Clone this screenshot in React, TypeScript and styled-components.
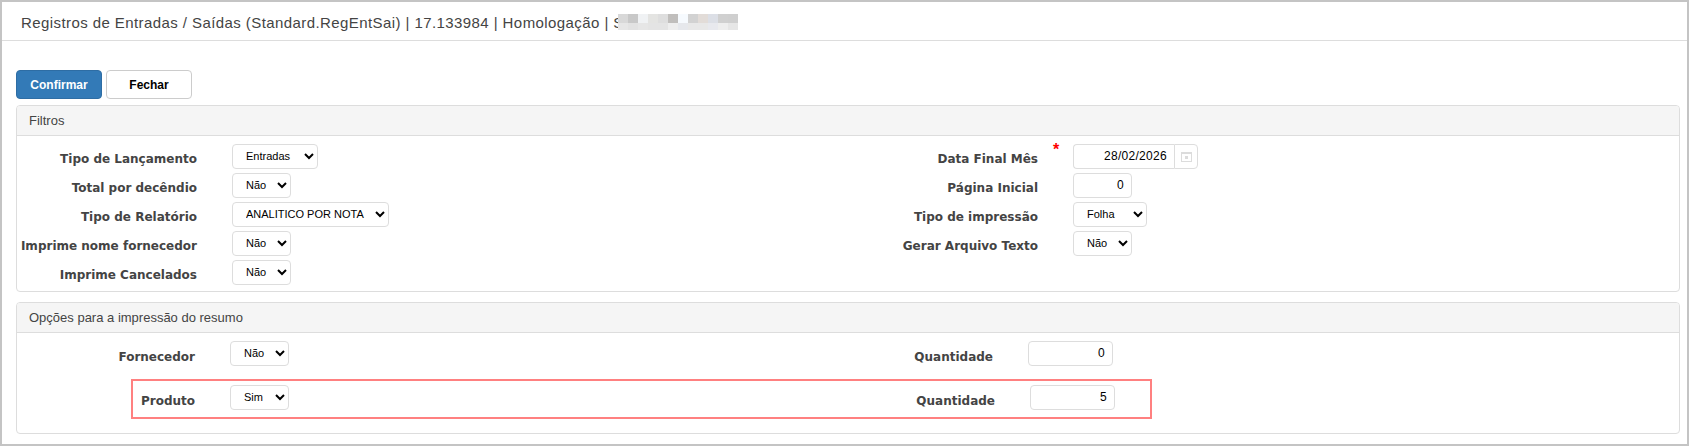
import * as React from "react";
import styled, { createGlobalStyle } from "styled-components";

const GlobalStyle = createGlobalStyle`
	html, body {
		margin: 0;
		padding: 0;
		background: #fff;
	}
`;

const Shell = styled.div`
	box-sizing: border-box;
	width: 1689px;
	height: 446px;
	border: 2px solid #c4c4c4;
	background: #fff;
	font-family: "Liberation Sans", Arial, sans-serif;
`;

const TitleBar = styled.div`
	box-sizing: border-box;
	display: flex;
	align-items: center;
	height: 39px;
	padding: 2px 0 0 19px;
	border-bottom: 1px solid #ddd;
	font-size: 15px;
	letter-spacing: 0.42px;
	color: #444;
	white-space: pre;
`;

const Blurred = styled.span`
	display: grid;
	grid-template-columns: repeat(12, 10px);
	grid-template-rows: 9px 7px;
	margin-left: -6px;
`;

const BlurCell = styled.span<{ $shade: string }>`
	display: block;
	background: ${(p) => p.$shade};
`;

const Toolbar = styled.div`
	display: flex;
	gap: 4px;
	padding: 29px 0 6px 14px;
`;

const Button = styled.button<{ $primary?: boolean }>`
	box-sizing: border-box;
	width: 86px;
	height: 29px;
	padding: 0;
	border: 1px solid ${(p) => (p.$primary ? "#2e6da4" : "#ccc")};
	border-radius: 4px;
	background: ${(p) => (p.$primary ? "#337ab7" : "#fff")};
	color: ${(p) => (p.$primary ? "#fff" : "#000")};
	font-family: "Liberation Sans", Arial, sans-serif;
	font-size: 12px;
	font-weight: bold;
`;

const Panel = styled.section`
	position: relative;
	box-sizing: border-box;
	width: 1664px;
	margin: 0 0 10px 14px;
	border: 1px solid #ddd;
	border-radius: 4px;
`;

const PanelHeading = styled.div`
	box-sizing: border-box;
	height: 30px;
	padding-left: 12px;
	line-height: 29px;
	border-bottom: 1px solid #ddd;
	border-radius: 3px 3px 0 0;
	background: #f5f5f5;
	font-size: 13px;
	color: #444;
`;

const PanelBody = styled.div<{ $height: number }>`
	display: grid;
	grid-template-columns: 830px 1fr;
	height: ${(p) => p.$height}px;
	padding-top: 8px;
	box-sizing: border-box;
`;

const Column = styled.div<{ $gap: number }>`
	display: flex;
	flex-direction: column;
	gap: ${(p) => p.$gap}px;
`;

const Field = styled.div<{ $labelWidth: number; $shift?: number }>`
	position: relative;
	display: grid;
	grid-template-columns: ${(p) => p.$labelWidth}px auto;
	column-gap: 35px;
	justify-content: start;
	align-items: start;
	height: 25px;
	margin-left: ${(p) => p.$shift ?? 0}px;
`;

const Label = styled.label<{ $low?: boolean }>`
	padding-top: ${(p) => (p.$low ? "7px" : "6px")};
	text-align: right;
	font-family: "DejaVu Sans", Verdana, sans-serif;
	font-size: 12px;
	font-weight: bold;
	line-height: 18px;
	color: #444;
	white-space: nowrap;
`;

const Required = styled.span`
	position: absolute;
	left: 206px;
	top: -2px;
	color: #f00;
	font-size: 16px;
	font-weight: bold;
	line-height: 16px;
`;

const Select = styled.select<{ $width: number }>`
	box-sizing: border-box;
	width: ${(p) => p.$width}px;
	height: 25px;
	padding: 0 0 2px 9px;
	border: 1px solid #ddd;
	border-radius: 4px;
	background: #fff;
	color: #000;
	font-family: "Liberation Sans", Arial, sans-serif;
	font-size: 11px;
`;

const NumberInput = styled.input<{ $width: number }>`
	box-sizing: border-box;
	width: ${(p) => p.$width}px;
	height: 25px;
	padding: 0 7px 2px 0;
	border: 1px solid #ddd;
	border-radius: 4px;
	background: #fff;
	color: #000;
	text-align: right;
	font-family: "Liberation Sans", Arial, sans-serif;
	font-size: 12px;
	letter-spacing: 0.3px;
`;

const DateGroup = styled.div`
	display: flex;
	width: 125px;
	height: 25px;
`;

const DateInput = styled(NumberInput)`
	border-right: 0;
	border-radius: 4px 0 0 4px;
`;

const DateAddon = styled.span`
	box-sizing: border-box;
	display: flex;
	align-items: center;
	justify-content: center;
	width: 24px;
	border: 1px solid #ddd;
	border-radius: 0 4px 4px 0;
	background: #fff;
`;

// marcação vermelha por cima da linha Produto
const Highlight = styled.div`
	position: absolute;
	left: 114px;
	top: 76px;
	box-sizing: border-box;
	width: 1021px;
	height: 40px;
	border: 2px solid #ff8080;
	pointer-events: none;
`;

function CalendarIcon() {
	return (
		<svg width="11" height="11" viewBox="0 0 11 11" fill="none">
			<rect x="0.5" y="1.5" width="10" height="9" stroke="#dcdcdc" />
			<rect x="1" y="1" width="9" height="2" fill="#dcdcdc" />
			<rect x="4" y="5" width="3" height="3" fill="#dcdcdc" />
		</svg>
	);
}

const blurCells = [
	"#d8d8d8", "#c8c8c8", "#f0f2f4", "#e4e4e2", "#dedede", "#c0bebc",
	"#f6fafe", "#d2d2d2", "#e2dcd8", "#dcdfe6", "#d0d0d0", "#cfcfcf",
	"#e6e6e6", "#e2e2e2", "#e6e6e6", "#e4e4e4", "#e4e4e4", "#eeeeee",
	"#e6e8ec", "#e8e8e8", "#e8e8e8", "#e8e9ee", "#eeeeee", "#e6e6e6",
];

export default function App() {
	return (
		<Shell>
			<GlobalStyle />
			<TitleBar>
				Registros de Entradas / Saídas (Standard.RegEntSai) | 17.133984 | Homologação | S
				<Blurred>
					{blurCells.map((shade, i) => (
						<BlurCell key={i} $shade={shade} />
					))}
				</Blurred>
			</TitleBar>
			<Toolbar>
				<Button $primary>Confirmar</Button>
				<Button>Fechar</Button>
			</Toolbar>
			<Panel>
				<PanelHeading>Filtros</PanelHeading>
				<PanelBody $height={155}>
					<Column $gap={4}>
						<Field $labelWidth={180}>
							<Label>Tipo de Lançamento</Label>
							<Select $width={86} defaultValue="Entradas">
								<option>Entradas</option>
							</Select>
						</Field>
						<Field $labelWidth={180}>
							<Label>Total por decêndio</Label>
							<Select $width={59} defaultValue="Não">
								<option>Não</option>
							</Select>
						</Field>
						<Field $labelWidth={180}>
							<Label>Tipo de Relatório</Label>
							<Select $width={157} defaultValue="ANALITICO POR NOTA">
								<option>ANALITICO POR NOTA</option>
							</Select>
						</Field>
						<Field $labelWidth={180}>
							<Label>Imprime nome fornecedor</Label>
							<Select $width={59} defaultValue="Não">
								<option>Não</option>
							</Select>
						</Field>
						<Field $labelWidth={180}>
							<Label>Imprime Cancelados</Label>
							<Select $width={59} defaultValue="Não">
								<option>Não</option>
							</Select>
						</Field>
					</Column>
					<Column $gap={4}>
						<Field $labelWidth={191}>
							<Label>Data Final Mês</Label>
							<Required>*</Required>
							<DateGroup>
								<DateInput $width={101} defaultValue="28/02/2026" />
								<DateAddon>
									<CalendarIcon />
								</DateAddon>
							</DateGroup>
						</Field>
						<Field $labelWidth={191}>
							<Label>Página Inicial</Label>
							<NumberInput $width={59} defaultValue="0" />
						</Field>
						<Field $labelWidth={191}>
							<Label>Tipo de impressão</Label>
							<Select $width={74} defaultValue="Folha">
								<option>Folha</option>
							</Select>
						</Field>
						<Field $labelWidth={191}>
							<Label>Gerar Arquivo Texto</Label>
							<Select $width={59} defaultValue="Não">
								<option>Não</option>
							</Select>
						</Field>
					</Column>
				</PanelBody>
			</Panel>
			<Panel>
				<PanelHeading>Opções para a impressão do resumo</PanelHeading>
				<PanelBody $height={100}>
					<Column $gap={19}>
						<Field $labelWidth={178}>
							<Label $low>Fornecedor</Label>
							<Select $width={59} defaultValue="Não">
								<option>Não</option>
							</Select>
						</Field>
						<Field $labelWidth={178}>
							<Label $low>Produto</Label>
							<Select $width={59} defaultValue="Sim">
								<option>Sim</option>
							</Select>
						</Field>
					</Column>
					<Column $gap={19}>
						<Field $labelWidth={146}>
							<Label $low>Quantidade</Label>
							<NumberInput $width={85} defaultValue="0" />
						</Field>
						<Field $labelWidth={146} $shift={2}>
							<Label $low>Quantidade</Label>
							<NumberInput $width={85} defaultValue="5" />
						</Field>
					</Column>
				</PanelBody>
				<Highlight />
			</Panel>
		</Shell>
	);
}
